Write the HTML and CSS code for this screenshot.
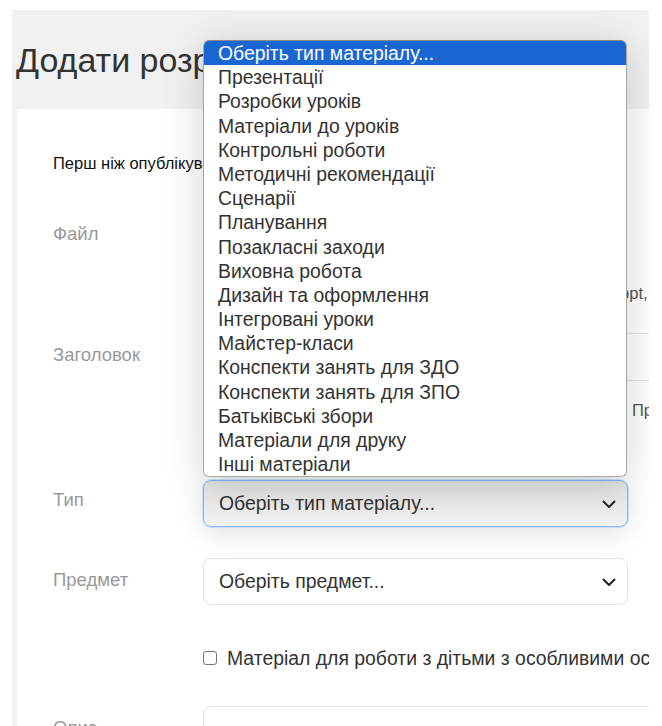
FILE: index.html
```html
<!DOCTYPE html>
<html lang="uk">
<head>
<meta charset="utf-8">
<title>Додати розробку</title>
<link rel="stylesheet" href="styles.css">
</head>
<body>
<div class="page">
  <h1 class="page-title">Додати розробку</h1>
  <div class="card">
    <p class="intro">Перш ніж опублікувати розробку, ознайомтеся з правилами сайту.</p>

    <div class="row row-file">
      <label class="label">Файл</label>
      <div class="control">
        <div class="file-input"><span class="file-btn">Оберіть файл</span><span class="file-name">Файл не вибрано</span></div>
        <div class="hint">Максимальний розмір — 100 МБ. Формати: doc, docx, ppt, pptx, pdf</div>
      </div>
    </div>

    <div class="row row-title">
      <label class="label">Заголовок</label>
      <div class="control">
        <div class="text-input"></div>
        <div class="hint hint-right">Приклад: «Презентація до уроку»</div>
      </div>
    </div>

    <div class="row row-type">
      <label class="label">Тип</label>
      <div class="control">
        <div class="select select-open">
          <span>Оберіть тип матеріалу...</span>
          <svg class="chevron" viewBox="0 0 16 16" width="16" height="16"><path d="M2.5 5.5 8 11l5.5-5.5" fill="none" stroke="#222" stroke-width="2" stroke-linecap="round" stroke-linejoin="round"/></svg>
        </div>
      </div>
    </div>

    <div class="row row-subject">
      <label class="label">Предмет</label>
      <div class="control">
        <div class="select">
          <span>Оберіть предмет...</span>
          <svg class="chevron" viewBox="0 0 16 16" width="16" height="16"><path d="M2.5 5.5 8 11l5.5-5.5" fill="none" stroke="#222" stroke-width="2" stroke-linecap="round" stroke-linejoin="round"/></svg>
        </div>
      </div>
    </div>

    <div class="row row-check">
      <div class="label"></div>
      <label class="check"><span class="box"></span>Матеріал для роботи з дітьми з особливими освітніми потребами</label>
    </div>

    <div class="row row-desc">
      <label class="label">Опис</label>
      <div class="control"><div class="textarea"></div></div>
    </div>
  </div>

  <ul class="dropdown">
    <li class="active">Оберіть тип матеріалу...</li>
    <li>Презентації</li>
    <li>Розробки уроків</li>
    <li>Матеріали до уроків</li>
    <li>Контрольні роботи</li>
    <li>Методичні рекомендації</li>
    <li>Сценарії</li>
    <li>Планування</li>
    <li>Позакласні заходи</li>
    <li>Виховна робота</li>
    <li>Дизайн та оформлення</li>
    <li>Інтегровані уроки</li>
    <li>Майстер-класи</li>
    <li>Конспекти занять для ЗДО</li>
    <li>Конспекти занять для ЗПО</li>
    <li>Батьківські збори</li>
    <li>Матеріали для друку</li>
    <li>Інші матеріали</li>
  </ul>
</div>
</body>
</html>
```

FILE: styles.css
```css
html, body {
  margin: 0;
  padding: 0;
  background: #fff;
  font-family: "Liberation Sans", Arial, sans-serif;
  color: #333;
}

.page {
  position: relative;
  margin: 10px 13px 0 12px;
  height: 716px;
  background: #f1f1f1;
  padding-left: 5px;
  overflow: hidden;
}

.page-title {
  margin: 0 0 0 -1px;
  height: 99px;
  box-sizing: border-box;
  padding-top: 29px;
  font-size: 34px;
  font-weight: 400;
  line-height: 42px;
  color: #333;
  white-space: nowrap;
}

.card {
  background: #fff;
  width: 760px;
  min-height: 640px;
  padding: 44px 0 0 36px;
  box-sizing: border-box;
}

.intro {
  margin: 0;
  font-size: 16.5px;
  line-height: 20px;
  color: #111;
  white-space: nowrap;
}

.row {
  display: grid;
  grid-template-columns: 150px 1fr;
  align-items: start;
}

.label {
  font-size: 18.5px;
  color: #999;
  line-height: 22px;
}

.control {
  min-width: 0;
}

/* file picker */
.row-file {
  margin-top: 41px;
}
.row-file .label {
  line-height: 40px;
}
.file-input {
  display: flex;
  align-items: center;
  gap: 10px;
  height: 40px;
  font-size: 16.5px;
}
.file-btn {
  border: 1px solid #aaa;
  border-radius: 3px;
  padding: 3px 8px;
  background: #efefef;
}
.hint {
  font-size: 16.5px;
  line-height: 20px;
  color: #555;
  white-space: nowrap;
}
.row-file .hint {
  margin-top: 29px;
}

/* title input */
.row-title {
  margin-top: 30px;
}
.row-title .label {
  line-height: 44px;
}
.text-input {
  height: 48px;
  box-sizing: border-box;
  border: 1px solid #dee2e6;
  border-radius: 8px;
}
.hint-right {
  padding-left: 429px;
  margin-top: 19px;
}

/* selects */
.row-type {
  margin-top: 60px;
}
.row-type .label {
  line-height: 40px;
}
.row-subject {
  margin-top: 31px;
}
.row-subject .label {
  line-height: 44px;
}
.control .select {
  width: 425px;
}
.select {
  display: flex;
  align-items: center;
  justify-content: space-between;
  height: 47px;
  box-sizing: border-box;
  padding: 0 10px 0 15px;
  border: 1px solid #dee2e6;
  border-radius: 8px;
  background: #fff;
  font-size: 19.4px;
  color: #333;
}
.select-open {
  border-color: #86b7fe;
  background: linear-gradient(#e3e3e3, #f1f1f1);
  box-shadow: 0 0 0 1px rgba(134, 183, 254, 0.35), 0 6px 28px rgba(0, 0, 0, 0.12);
}
.chevron {
  flex: none;
}

/* checkbox */
.row-check {
  margin-top: 41px;
}
.check {
  display: flex;
  align-items: center;
  gap: 10px;
  height: 24px;
  font-size: 19.4px;
  white-space: nowrap;
  color: #333;
}
.box {
  width: 14px;
  height: 14px;
  border: 1px solid #767676;
  border-radius: 3px;
  box-sizing: border-box;
  background: #fff;
  flex: none;
}

/* description */
.row-desc {
  margin-top: 36px;
}
.row-desc .label {
  padding-top: 11px;
}
.textarea {
  height: 120px;
  border: 1px solid #dee2e6;
  border-radius: 8px;
}

/* open list of the type select */
.dropdown {
  position: absolute;
  left: 191px;
  top: 30px;
  width: 424px;
  margin: 0;
  padding: 0;
  list-style: none;
  background: #fff;
  border: 1px solid #a8a8a8;
  border-top-color: #888;
  border-radius: 6px;
  box-sizing: border-box;
  overflow: hidden;
  box-shadow: 0 6px 40px rgba(0, 0, 0, 0.18);
  font-size: 19.4px;
  color: #333;
}
.dropdown li {
  height: 24.2px;
  line-height: 24px;
  padding-left: 14px;
  white-space: nowrap;
}
.dropdown li.active {
  background: #1a66d2;
  color: #fff;
}
```
